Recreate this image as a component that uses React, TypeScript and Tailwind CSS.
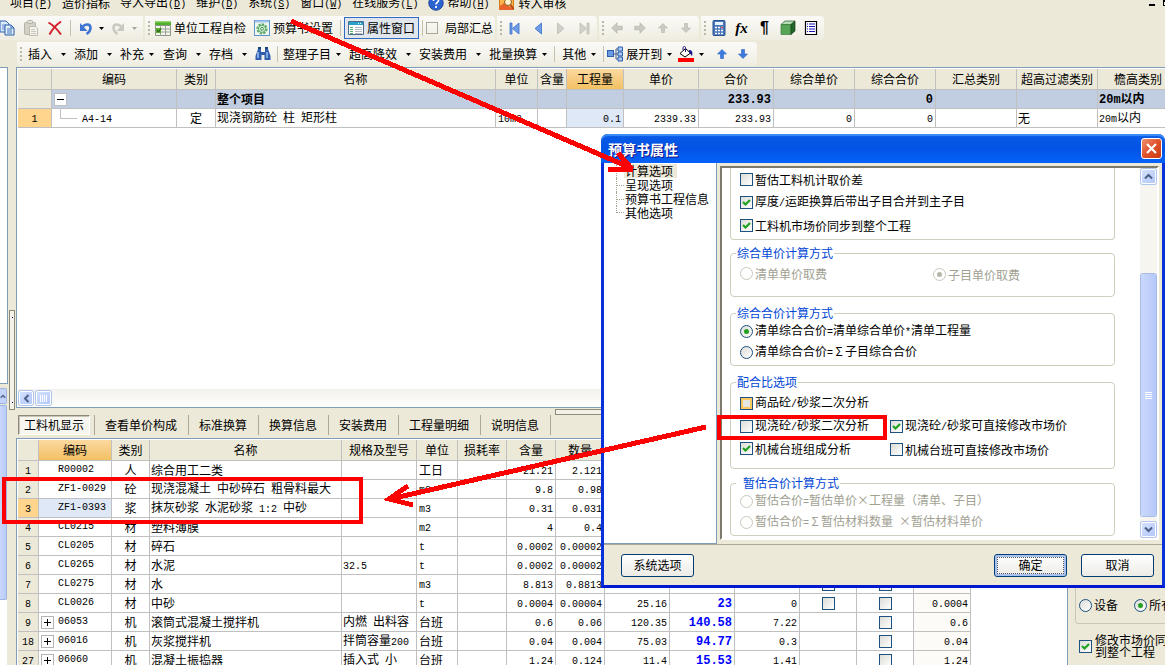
import { ReactNode } from "react";
import clsx from "clsx";

/* Latin runs are set in a half-width face next to the full-width characters */
function T({ children, bold }: { children: string; bold?: boolean }) {
    return (
        <>
            {children.split(/([\x20-\x7e]+|Σ)/).map((part, i) => {
                if (part === "Σ") {
                    return <span key={i} className="inline-block w-3 text-center">Σ</span>;
                }
                return i % 2 ? (
                    <span
                        key={i}
                        className={clsx(
                            "font-['Liberation_Mono',monospace] whitespace-pre",
                            bold ? "text-[12px] font-bold" : "text-[10px]",
                        )}
                    >
                        {part}
                    </span>
                ) : (
                    part
                );
            })}
        </>
    );
}

/* ---------- icons ---------- */

function Svg({ children, size = 16 }: { children: ReactNode; size?: number }) {
    return (
        <svg width={size} height={size} viewBox="0 0 16 16" className="shrink-0" aria-hidden="true">
            {children}
        </svg>
    );
}

const CopyIcon = () => (
    <Svg>
        <path d="M1 1h6l3 3v8H1z" fill="#dcebfb" stroke="#2f62ad" />
        <path d="M3 5h4M3 7h4M3 9h3" stroke="#5b8cd0" />
        <path d="M6 5h6l3 3v7H6z" fill="#e8f2fd" stroke="#2458a6" />
        <path d="M12 5v3h3M8 9h5M8 11h5M8 13h5" stroke="#3a70bd" fill="none" />
    </Svg>
);

const PasteIcon = () => (
    <Svg>
        <rect x="1.5" y="2.5" width="11" height="12" rx="1" fill="#d3d1c7" stroke="#b5b2a5" />
        <rect x="4.5" y="0.5" width="5" height="3" rx="1" fill="#e3e1d8" stroke="#b0ada0" />
        <path d="M6.500 6.500h6l2 2v7h-8z" fill="#f4f3ee" stroke="#bdbab0" />
        <path d="M8 9.500h4M8 11.500h5M8 13.500h5" stroke="#c9c6bc" />
    </Svg>
);

const DeleteIcon = () => (
    <Svg>
        <path d="M1.500 2.500C6 5 10 9 14 14.500M14 1.500C9 5 5 9.500 2.500 14.500" stroke="#d3212b" strokeWidth="2" fill="none" />
    </Svg>
);

const UndoIcon = ({ off }: { off?: boolean }) => (
    <Svg>
        <g transform={off ? "translate(16 0) scale(-1 1)" : undefined}>
            <path
                d="M4 8C6 4 12 3 12.500 7.500C12.500 10.500 11 12.500 8.500 14"
                stroke={off ? "#cbc9bf" : "#3f74d0"}
                strokeWidth="2.600"
                fill="none"
            />
            <path d="M2 3v8h7.500z" fill={off ? "#cbc9bf" : "#3f74d0"} />
        </g>
    </Svg>
);

const TableIcon = () => (
    <Svg>
        <path d="M0 1h16v4H0z" fill="#4fae2a" />
        <path d="M0 1h16v1.500H0z" fill="#8fd66d" />
        <path d="M0.500 5.500h15v10H0.500z" fill="#f4f6ee" stroke="#8c9488" />
        <path d="M0 9h16M0 12h16M5.500 5v11M10.500 5v11" stroke="#9aa396" />
        <rect x="1" y="8" width="5" height="5" fill="#5cab34" />
        <path d="M2 10l1.500 2L6 8.500" stroke="#164d08" fill="none" />
    </Svg>
);

const GearIcon = () => (
    <Svg>
        <rect x="0.500" y="0.500" width="15" height="15" fill="#eef6f0" stroke="#5f95cf" />
        <path d="M1 1.500h14" stroke="#a3c6ee" strokeWidth="2" />
        <circle cx="8" cy="8.800" r="4.600" fill="none" stroke="#5aa865" strokeWidth="2" strokeDasharray="2.300 1.200" />
        <circle cx="8" cy="8.800" r="3.600" fill="#d6efd8" stroke="#5aa865" />
        <circle cx="8" cy="8.800" r="1.400" fill="#fff" stroke="#3f8e4b" />
    </Svg>
);

const PropsIcon = () => (
    <Svg>
        <path d="M0.500 1.500h15v13H0.500z" fill="#fff" stroke="#4e6a8c" />
        <path d="M1 2h14v3H1z" fill="#2ba0c8" />
        <path d="M10 3.500h1M12 3.500h1" stroke="#fff" />
        <path d="M2 7.500h3M2 9.500h3M2 11.500h3M2 13.500h3" stroke="#4fae6a" />
        <path d="M7 7.500h7M7 9.500h7M7 11.500h7M7 13.500h7" stroke="#b6bcc4" />
    </Svg>
);

const NavIcon = ({ kind, off }: { kind: "first" | "prev" | "next" | "last"; off?: boolean }) => {
    const fill = off ? "#d2d0c8" : "#6d9de6";
    const flip = kind === "next" || kind === "last";
    return (
        <Svg>
            <g transform={flip ? "translate(16 0) scale(-1 1)" : undefined} fill={fill} stroke={off ? "#bfbdb4" : "#3a6fca"} strokeWidth="0.800">
                {(kind === "first" || kind === "last") && <path d="M3 3h2v11H3z" />}
                {kind === "first" || kind === "last" ? <path d="M12 3v11L5.500 8.500z" /> : <path d="M11.500 3v11L5 8.500z" />}
            </g>
        </Svg>
    );
};

const ArrowIcon = ({ deg, off = false }: { deg: number; off?: boolean }) => (
    <Svg size={deg % 180 ? 12 : 14}>
        <path
            d="M2 8l6-6v4h6v4H8v4z"
            transform={`rotate(${deg} 8 8)`}
            fill={off ? "#cccac2" : "#3f7ae0"}
            stroke={off ? "#b5b3aa" : "#2c62c4"}
            strokeWidth="0.800"
        />
    </Svg>
);

const CalcIcon = () => (
    <Svg>
        <rect x="2" y="0.500" width="12" height="15" rx="1" fill="#4a76bb" stroke="#27508f" />
        <rect x="4" y="2" width="8" height="3" fill="#e8f3ff" />
        <path d="M4 7.500h8M4 10.500h8M4 13.500h8" stroke="#fff" strokeWidth="1.600" strokeDasharray="2 1" />
        <path d="M10 7.500h2" stroke="#e0574a" strokeWidth="1.600" />
    </Svg>
);

const CubeIcon = () => (
    <Svg>
        <path d="M1 4.500L5 1h10l-4 3.500z" fill="#b5dbb5" stroke="#2c5a2c" strokeWidth="0.700" />
        <path d="M1 4.500h10v10H1z" fill="#56a556" stroke="#3c7b3c" strokeWidth="0.700" />
        <path d="M11 4.500L15 1v10l-4 3.500z" fill="#22652a" stroke="#163f1a" strokeWidth="0.700" />
    </Svg>
);

const ListIcon = () => (
    <Svg>
        <path d="M2.500 1.500h11v13h-11z" fill="#fff" stroke="#000" strokeWidth="1.200" />
        <path d="M4 4h1M4 6.500h1M4 9h1M4 11.500h1M6 4h6M6 6.500h6M6 9h6M6 11.500h6" stroke="#1515b8" strokeWidth="1.200" />
    </Svg>
);

const FindIcon = () => (
    <Svg>
        <path d="M3 3h3v3h4V3h3l2.500 7v4h-6V9h-3v5h-6v-4z" fill="#2f5fae" />
        <path d="M3 1h3v2H3zM10 1h3v2h-3z" fill="#1c3f80" />
        <path d="M3 6v6M12 6v6" stroke="#9cc0f0" strokeWidth="1.500" />
    </Svg>
);

const TreeIcon = () => (
    <Svg>
        <rect x="0.500" y="4.500" width="6" height="6" fill="#6b9be0" stroke="#2d5fae" />
        <path d="M7 8h2M9 3v10M9 3h2M9 8h2M9 13h2" stroke="#44618c" fill="none" />
        <path d="M11 1h4.500v4H11zM11 6h4.500v4H11zM11 11h4.500v4H11z" fill="#a9c8f2" stroke="#2d5fae" />
    </Svg>
);

const FillIcon = () => (
    <Svg>
        <path d="M2 7.500L7.500 2.500l5 4.500-5.500 4z" fill="#fff" stroke="#000" />
        <path d="M7.500 6V1.500C7.500 0 5 0 5 2v2" stroke="#1a1a80" fill="none" />
        <path d="M11 4c3 0 4 2 3 6c-1-1-1.500-2.500-3-3z" fill="#1a1a90" />
        <path d="M0 12h16v4H0z" fill="#f00" />
    </Svg>
);

const HelpIcon = () => (
    <Svg>
        <circle cx="8" cy="8" r="7.200" fill="#2a63cf" stroke="#1b469c" />
        <path d="M5.500 6c0-3.500 5-3.500 5-.5c0 2-2.500 2-2.500 4M8 11v2" stroke="#fff" strokeWidth="1.700" fill="none" />
    </Svg>
);

const AuditIcon = () => (
    <Svg>
        <rect x="0.500" y="1.500" width="14" height="13" fill="#f9b54a" stroke="#d8791b" />
        <path d="M1 11l4-3 9 6v1H1z" fill="#e8622d" />
        <circle cx="9" cy="7" r="3.500" fill="#fff3cf" stroke="#8a5a1c" />
        <path d="M11.500 10l3 4" stroke="#b8461b" strokeWidth="2" />
    </Svg>
);

const Caret = ({ off }: { off?: boolean }) => (
    <svg width="5" height="3" viewBox="0 0 5 3" aria-hidden="true">
        <path d="M0 0h5L2.500 3z" fill={off ? "#aaa79a" : "#000"} />
    </svg>
);

const Chevron = ({ deg }: { deg: number }) => (
    <svg width="9" height="9" viewBox="0 0 9 9" aria-hidden="true">
        <path d="M1 6.500L4.500 3 8 6.500" transform={`rotate(${deg} 4.500 4.500)`} fill="none" stroke="#4d6185" strokeWidth="2" />
    </svg>
);

/* ---------- form controls ---------- */

function CheckBox({ label, name, checked, tone = "border-[#1c5180] bg-linear-to-br from-[#dcdcd7] to-white" }: {
    label?: string;
    name: string;
    checked?: boolean;
    tone?: string;
}) {
    return (
        <label className="inline-flex items-center gap-[2px] whitespace-nowrap">
            <span className="grid size-[13px] shrink-0 place-items-center">
                <input
                    type="checkbox"
                    aria-label={label ? undefined : name}
                    defaultChecked={checked}
                    className={clsx("peer col-start-1 row-start-1 size-[13px] appearance-none border", tone)}
                />
                <svg
                    width="9"
                    height="9"
                    viewBox="0 0 9 9"
                    className="pointer-events-none invisible z-10 col-start-1 row-start-1 peer-checked:visible"
                >
                    <path d="M1 4l2.500 2.500L8 2" fill="none" stroke="#21a121" strokeWidth="2.200" />
                </svg>
            </span>
            {label && <span><T>{label}</T></span>}
        </label>
    );
}

function Radio({ label, name, checked, disabled }: { label: string; name: string; checked?: boolean; disabled?: boolean }) {
    return (
        <label className={clsx("inline-flex items-center gap-[2px] whitespace-nowrap", disabled && "text-[#a1a192]")}>
            <span className="grid size-[13px] shrink-0 place-items-center">
                <input
                    type="radio"
                    name={name}
                    defaultChecked={checked}
                    disabled={disabled}
                    className={clsx(
                        "peer col-start-1 row-start-1 size-[13px] appearance-none rounded-full border",
                        disabled ? "border-[#cac8bb] bg-white" : "border-[#1c5180] bg-linear-to-br from-[#dcdcd7] to-white",
                    )}
                />
                <span
                    className={clsx(
                        "pointer-events-none invisible z-10 col-start-1 row-start-1 size-[5px] rounded-full peer-checked:visible",
                        disabled ? "bg-[#b5b5a8]" : "bg-[#21a121]",
                    )}
                />
            </span>
            <span><T>{label}</T></span>
        </label>
    );
}

/* ---------- menu and toolbars ---------- */

const menus = [
    { text: "项目", key: "P" },
    { text: "造价指标" },
    { text: "导入导出", key: "D" },
    { text: "维护", key: "D" },
    { text: "系统", key: "S" },
    { text: "窗口", key: "W" },
    { text: "在线服务", key: "L" },
    { text: "帮助", key: "H", icon: <HelpIcon /> },
    { text: "转入审核", icon: <AuditIcon /> },
];

function MenuBar() {
    return (
        <nav className="flex h-4 items-start gap-[10px] overflow-hidden pl-[10px]">
            {menus.map((m) => (
                <button key={m.text} className="-mt-[5px] flex h-4 shrink-0 items-center gap-[3px] leading-4">
                    {m.icon}
                    <span>
                        {m.text}
                        {m.key && (
                            <span className="font-['Liberation_Mono',monospace] text-[10px]">
                                (<u>{m.key}</u>)
                            </span>
                        )}
                    </span>
                </button>
            ))}
            <span className="ml-auto flex gap-2">
                <button aria-label="最小化" className="mt-1 h-[2px] w-[6px] bg-black" />
                <button aria-label="还原" className="-mr-1 size-[6px] border border-t-2 border-black" />
            </span>
        </nav>
    );
}

const Grip = () => (
    <span className="flex w-[3px] shrink-0 flex-col gap-[2px]">
        {[1, 2, 3, 4].map((n) => (
            <i key={n} className="size-[2px] bg-[#b9b6a5]" />
        ))}
    </span>
);

const Sep = () => <span className="mx-[3px] h-4 w-px shrink-0 bg-[#c5c2b2]" />;

const segment = "flex h-6 shrink-0 items-center rounded-r-sm bg-linear-to-b from-[#fbfaf8] to-[#efede1] pl-[3px] pr-[2px]";

function IconButton({ label, children, size = "w-[23px]" }: { label: string; children: ReactNode; size?: string }) {
    return (
        <button aria-label={label} className={clsx("flex h-6 shrink-0 items-center justify-center", size)}>
            {children}
        </button>
    );
}

function MainToolbar() {
    return (
        <div className="flex gap-[2px] overflow-hidden">
            <div className="-ml-[5px] flex h-6 shrink-0 items-center bg-linear-to-b from-[#fbfaf8] to-[#efede1] pr-1">
                <IconButton label="复制" size="w-6"><CopyIcon /></IconButton>
                <IconButton label="粘贴" size="w-6"><PasteIcon /></IconButton>
                <IconButton label="删除" size="w-6"><DeleteIcon /></IconButton>
                <Sep />
                <IconButton label="撤销" size="w-[23px]"><UndoIcon /></IconButton>
                <IconButton label="撤销列表" size="w-[9px]"><Caret /></IconButton>
                <IconButton label="重做" size="w-6"><UndoIcon off /></IconButton>
                <IconButton label="重做列表" size="w-[9px]"><Caret off /></IconButton>
            </div>
            <div className={segment}>
                <Grip />
                <button className="flex items-center gap-[3px] px-1"><TableIcon />单位工程自检</button>
                <button className="flex items-center gap-[3px] px-1"><GearIcon />预算书设置</button>
                <Sep />
                <button className="flex h-[22px] items-center gap-[3px] border border-[#316ac5] bg-[#e1e6ec] px-[3px]">
                    <PropsIcon />属性窗口
                </button>
                <Sep />
                <label className="flex items-center gap-[7px]">
                    <input type="checkbox" className="size-3 appearance-none border border-[#aca899]" />
                    局部汇总
                </label>
            </div>
            <div className={segment}>
                <Grip />
                <IconButton label="首条"><NavIcon kind="first" /></IconButton>
                <IconButton label="上一条"><NavIcon kind="prev" /></IconButton>
                <IconButton label="下一条"><NavIcon kind="next" off /></IconButton>
                <IconButton label="末条"><NavIcon kind="last" off /></IconButton>
            </div>
            <div className={segment}>
                <Grip />
                <IconButton label="左移"><ArrowIcon deg={0} off /></IconButton>
                <IconButton label="右移"><ArrowIcon deg={180} off /></IconButton>
                <IconButton label="上移"><ArrowIcon deg={90} off /></IconButton>
                <IconButton label="下移"><ArrowIcon deg={270} off /></IconButton>
            </div>
            <div className={segment}>
                <Grip />
                <IconButton label="计算器"><CalcIcon /></IconButton>
                <IconButton label="函数">
                    <i className="font-['Liberation_Serif',serif] text-[15px] font-bold">fx</i>
                </IconButton>
                <IconButton label="段落">
                    <span className="font-['Liberation_Sans',sans-serif] text-base font-bold">¶</span>
                </IconButton>
                <IconButton label="立方体"><CubeIcon /></IconButton>
                <IconButton label="列表"><ListIcon /></IconButton>
            </div>
        </div>
    );
}

function DropButton({ children, tight }: { children: ReactNode; tight?: boolean }) {
    return (
        <button className="flex h-6 shrink-0 items-center">
            {children}
            <span className={clsx("flex justify-center", tight ? "w-[14px]" : "w-[22px]")}>
                <Caret />
            </span>
        </button>
    );
}

function EditToolbar() {
    return (
        <div className="mt-[2px] flex overflow-hidden pl-[17px]">
            <div className={segment}>
                <Grip />
                <span className="w-[5px]" />
                <DropButton>插入</DropButton>
                <DropButton>添加</DropButton>
                <DropButton tight>补充</DropButton>
                <span className="w-[5px]" />
                <DropButton>查询</DropButton>
                <DropButton>存档</DropButton>
                <IconButton label="查找" size="w-4"><FindIcon /></IconButton>
                <span className="w-[3px]" />
                <Sep />
                <span className="w-[2px]" />
                <DropButton tight>整理子目</DropButton>
                <span className="w-1" />
                <DropButton>超高降效</DropButton>
                <DropButton>安装费用</DropButton>
                <DropButton tight>批量换算</DropButton>
                <Sep />
                <span className="w-1" />
                <DropButton tight>其他</DropButton>
                <Sep />
                <DropButton tight><span className="mr-[3px]"><TreeIcon /></span>展开到</DropButton>
                <span className="w-[2px]" />
                <DropButton tight><FillIcon /></DropButton>
                <span className="w-[3px]" />
                <IconButton label="向上" size="w-[21px]"><ArrowIcon deg={90} /></IconButton>
                <IconButton label="向下" size="w-[21px]"><ArrowIcon deg={270} /></IconButton>
                <span className="w-[2px]" />
            </div>
        </div>
    );
}

/* ---------- grids ---------- */

const cell = "h-[19px] overflow-hidden border-r border-b border-[#c0c0c0] p-0 whitespace-nowrap";
const head = "h-[21px] overflow-hidden border-r border-b border-[#c0c0c0] p-0 font-normal whitespace-nowrap";

const itemCols = ["w-[34px]", "w-[125px]", "w-[39px]", "", "w-[42px]", "w-[29px]", "w-[57px]", "w-[75px]", "w-[75px]", "w-[81px]", "w-[81px]", "w-[81px]", "w-[81px]", "w-[81px]"];
const itemHeads = ["", "编码", "类别", "名称", "单位", "含量", "工程量", "单价", "合价", "综合单价", "综合合价", "汇总类别", "超高过滤类别", "檐高类别"];

function ItemGrid() {
    return (
        <table className="w-full min-w-[1161px] table-fixed border-separate border-spacing-0">
            <colgroup>
                {itemCols.map((c, i) => <col key={i} className={c} />)}
            </colgroup>
            <thead>
                <tr>
                    {itemHeads.map((h, i) => (
                        <th key={i} className={clsx(head, h === "工程量" ? "bg-linear-to-b from-[#fbd9a0] to-[#f3c062]" : "bg-[#ece9d8]")}>
                            {h}
                        </th>
                    ))}
                </tr>
            </thead>
            <tbody>
                <tr className="bg-[#c1cde0] font-bold">
                    <td className={clsx(cell, "bg-[#ece9d8]")} />
                    <td className={clsx(cell, "pl-[2px]")}>
                        <button aria-label="折叠" className="flex size-[13px] items-center justify-center border border-[#c0c0c0] bg-white">
                            <span className="h-px w-[7px] bg-black" />
                        </button>
                    </td>
                    <td className={cell} />
                    <td className={clsx(cell, "pl-px")}>整个项目</td>
                    <td className={cell} />
                    <td className={cell} />
                    <td className={cell} />
                    <td className={cell} />
                    <td className={clsx(cell, "pr-[2px] text-right")}><T bold>233.93</T></td>
                    <td className={cell} />
                    <td className={clsx(cell, "pr-[2px] text-right")}><T bold>0</T></td>
                    <td className={cell} />
                    <td className={cell} />
                    <td className={clsx(cell, "pl-px")}><T bold>20m以内</T></td>
                </tr>
                <tr className="bg-white">
                    <td className={clsx(cell, "bg-[#ffd58d] text-center")}><T>1</T></td>
                    <td className={cell}>
                        <div className="flex h-[18px] pl-2">
                            <span className="h-[10px] w-[17px] border-b border-l border-[#c0c0c0]" />
                            <span className="pl-[5px] leading-4"><T>A4-14</T></span>
                        </div>
                    </td>
                    <td className={clsx(cell, "text-center")}>定</td>
                    <td className={clsx(cell, "pl-px")}><T>现浇钢筋砼 柱 矩形柱</T></td>
                    <td className={clsx(cell, "pl-[2px]")}><T>10m3</T></td>
                    <td className={cell} />
                    <td className={clsx(cell, "bg-[#dfe8f6] pr-[2px] text-right")}><T>0.1</T></td>
                    <td className={clsx(cell, "pr-[2px] text-right")}><T>2339.33</T></td>
                    <td className={clsx(cell, "pr-[2px] text-right")}><T>233.93</T></td>
                    <td className={clsx(cell, "pr-[2px] text-right")}><T>0</T></td>
                    <td className={clsx(cell, "pr-[2px] text-right")}><T>0</T></td>
                    <td className={cell} />
                    <td className={clsx(cell, "pl-px")}>无</td>
                    <td className={clsx(cell, "pl-px")}><T>20m以内</T></td>
                </tr>
            </tbody>
        </table>
    );
}

interface Resource {
    no: string;
    code: string;
    kind: string;
    name: string;
    spec?: string;
    unit: string;
    rate: string;
    qty: string;
    price?: string;
    market?: string;
    diff?: string;
    boxes?: number;
    total?: string;
}

const resources: Resource[] = [
    { no: "1", code: "R00002", kind: "人", name: "综合用工二类", unit: "工日", rate: "21.21", qty: "2.121" },
    { no: "2", code: "ZF1-0029", kind: "砼", name: "现浇混凝土 中砂碎石 粗骨料最大", unit: "m3", rate: "9.8", qty: "0.98" },
    { no: "3", code: "ZF1-0393", kind: "浆", name: "抹灰砂浆 水泥砂浆 1:2 中砂", unit: "m3", rate: "0.31", qty: "0.031" },
    { no: "4", code: "CL0215", kind: "材", name: "塑料薄膜", unit: "m2", rate: "4", qty: "0.4" },
    { no: "5", code: "CL0205", kind: "材", name: "碎石", unit: "t", rate: "0.0002", qty: "0.00002" },
    { no: "6", code: "CL0265", kind: "材", name: "水泥", spec: "32.5", unit: "t", rate: "0.0002", qty: "0.00002" },
    { no: "7", code: "CL0275", kind: "材", name: "水", unit: "m3", rate: "8.813", qty: "0.8813", boxes: 2 },
    { no: "8", code: "CL0026", kind: "材", name: "中砂", unit: "t", rate: "0.0004", qty: "0.00004", price: "25.16", market: "23", diff: "0", boxes: 2, total: "0.0004" },
    { no: "9", code: "06053", kind: "机", name: "滚筒式混凝土搅拌机", spec: "内燃 出料容", unit: "台班", rate: "0.6", qty: "0.06", price: "120.35", market: "140.58", diff: "7.22", boxes: 1, total: "0.6" },
    { no: "18", code: "06016", kind: "机", name: "灰浆搅拌机", spec: "拌筒容量200", unit: "台班", rate: "0.04", qty: "0.004", price: "75.03", market: "94.77", diff: "0.3", boxes: 1, total: "0.04" },
    { no: "27", code: "06060", kind: "机", name: "混凝土振捣器", spec: "插入式 小", unit: "台班", rate: "1.24", qty: "0.124", price: "11.4", market: "15.53", diff: "1.41", boxes: 1, total: "1.24" },
];

const resCols = ["w-[21px]", "w-[73px]", "w-[38px]", "w-[192px]", "w-[75px]", "w-[41px]", "w-[49px]", "w-[49px]", "w-[49px]", "w-[65px]", "w-[65px]", "w-[65px]", "w-[57px]", "w-[57px]", "w-[57px]"];
const resHeads = ["", "编码", "类别", "名称", "规格及型号", "单位", "损耗率", "含量", "数量", "", "", "", "", "", ""];

function ResourceGrid() {
    return (
        <table className="w-[953px] table-fixed border-separate border-spacing-0">
            <colgroup>
                {resCols.map((c, i) => <col key={i} className={c} />)}
            </colgroup>
            <thead>
                <tr>
                    {resHeads.map((h, i) => (
                        <th key={i} className={clsx(head, h === "编码" ? "bg-linear-to-b from-[#fbd9a0] to-[#f3c062]" : "bg-[#ece9d8]")}>
                            {h}
                        </th>
                    ))}
                </tr>
            </thead>
            <tbody>
                {resources.map((r) => (
                    <tr key={r.no} className="bg-white">
                        <td className={clsx(cell, "text-center", r.no === "3" ? "bg-[#ffd58d]" : "bg-[#ece9d8]")}><T>{r.no}</T></td>
                        <td className={clsx(cell, r.no === "3" && "bg-[#dfe8f6]")}>
                            <div className="flex h-[18px] items-center pl-[2px]">
                                <span className="flex w-[17px] shrink-0">
                                    {r.kind === "机" && (
                                        <button aria-label="展开" className="grid size-[13px] place-items-center border border-[#b4b4b4] bg-white">
                                            <span className="col-start-1 row-start-1 h-px w-[7px] bg-black" />
                                            <span className="col-start-1 row-start-1 h-[7px] w-px bg-black" />
                                        </button>
                                    )}
                                </span>
                                <T>{r.code}</T>
                            </div>
                        </td>
                        <td className={clsx(cell, "text-center")}>{r.kind}</td>
                        <td className={clsx(cell, "pl-px")}><T>{r.name}</T></td>
                        <td className={clsx(cell, "pl-px")}><T>{r.spec ?? ""}</T></td>
                        <td className={clsx(cell, "pl-[2px]")}><T>{r.unit}</T></td>
                        <td className={cell} />
                        <td className={clsx(cell, "pr-[2px] text-right")}><T>{r.rate}</T></td>
                        <td className={clsx(cell, "pr-[2px] text-right")}><T>{r.qty}</T></td>
                        <td className={clsx(cell, "pr-[2px] text-right")}><T>{r.price ?? ""}</T></td>
                        <td className={clsx(cell, "pr-[2px] text-right text-[#0000ff]")}><T bold>{r.market ?? ""}</T></td>
                        <td className={clsx(cell, "pr-[2px] text-right")}><T>{r.diff ?? ""}</T></td>
                        <td className={cell}>
                            <div className="flex justify-center">{r.boxes === 2 && <CheckBox name={`${r.name} 暂估`} />}</div>
                        </td>
                        <td className={cell}>
                            <div className="flex justify-center">{r.boxes && <CheckBox name={`${r.name} 锁定`} />}</div>
                        </td>
                        <td className={clsx(cell, "bg-[#fdfbf7] pr-[2px] text-right")}><T>{r.total ?? ""}</T></td>
                    </tr>
                ))}
            </tbody>
        </table>
    );
}

const tabs = ["查看单价构成", "标准换算", "换算信息", "安装费用", "工程量明细", "说明信息"];

function Tabs() {
    return (
        <div className="flex h-[22px] items-center pl-[2px]">
            <button className="h-5 border border-[#8d8a7c] border-r-white border-b-white bg-[#f6f5ef] px-[5px] shadow-[inset_1px_1px_0_#c8c5b6]">
                工料机显示
            </button>
            <span className="ml-1 h-5 w-px bg-[#aca899]" />
            {tabs.map((t) => (
                <button key={t} className="h-5 border-r border-[#aca899] pr-[11px] pl-[10px]">
                    {t}
                </button>
            ))}
        </div>
    );
}

const scrollButton = "flex shrink-0 items-center justify-center rounded-[2px] border border-white bg-linear-to-br from-[#d4e0fd] to-[#b3c8fa] shadow-[0_0_0_1px_#b0c4ec]";

function FilterPanel() {
    return (
        <aside className="w-[98px] shrink-0 overflow-hidden border-l border-[#7f9db9] bg-[#ece9d8] pl-[7px]">
            <div className="flex h-[186px] w-[140px] items-end rounded-[3px] border border-[#c9c7b5] pb-[11px] pl-[3px]">
                <div className="flex gap-4">
                    <Radio name="scope" label="设备" />
                    <Radio name="scope" label="所有" checked />
                </div>
            </div>
            <div className="mt-[10px] flex w-[140px] items-center pl-1">
                <label className="flex items-center gap-[3px] leading-3">
                    <CheckBox name="修改市场价同步到整个工程" checked />
                    <span>修改市场价同步<br />到整个工程</span>
                </label>
            </div>
        </aside>
    );
}

/* ---------- dialog ---------- */

const group = "w-[385px] rounded-[4px] border border-[#cfcfbd] px-[9px]";
const legend = "-ml-1 px-px leading-3 text-[#0046d5]";
const row = "flex h-[23px] items-center";
const shortRow = "flex h-[21px] items-center";

function OptionPage() {
    return (
        <div className="flex-1 overflow-hidden bg-white pl-2">
            <div className={clsx(group, "rounded-t-none border-t-0 pb-[2px]")}>
                <div className={row}><CheckBox name="diff" label="暂估工料机计取价差" /></div>
                <div className={row}><CheckBox name="merge" label="厚度/运距换算后带出子目合并到主子目" checked /></div>
                <div className={row}><CheckBox name="sync" label="工料机市场价同步到整个工程" checked /></div>
            </div>
            <fieldset className={clsx(group, "mt-[7px] pt-1 pb-[10px]")}>
                <legend className={legend}>综合单价计算方式</legend>
                <div className={row}>
                    <span className="w-[193px]"><Radio name="unit" label="清单单价取费" disabled /></span>
                    <Radio name="unit" label="子目单价取费" checked disabled />
                </div>
            </fieldset>
            <fieldset className={clsx(group, "mt-[10px] pt-[2px] pb-[2px]")}>
                <legend className={legend}>综合合价计算方式</legend>
                <div className={shortRow}><Radio name="sum" label="清单综合合价=清单综合单价*清单工程量" checked /></div>
                <div className={shortRow}><Radio name="sum" label="清单综合合价=Σ子目综合合价" /></div>
            </fieldset>
            <fieldset className={clsx(group, "mt-[10px] pt-1 pb-[7px]")}>
                <legend className={legend}>配合比选项</legend>
                <div className={row}>
                    <CheckBox name="mix" label="商品砼/砂浆二次分析" tone="border-[#1c5180] bg-[#e6e6e0] shadow-[inset_0_0_0_2px_#fbc761]" />
                </div>
                <div className={row}>
                    <span className="w-[150px]"><CheckBox name="cast" label="现浇砼/砂浆二次分析" /></span>
                    <CheckBox name="castPrice" label="现浇砼/砂浆可直接修改市场价" checked />
                </div>
                <div className={row}>
                    <span className="w-[150px]"><CheckBox name="shift" label="机械台班组成分析" checked /></span>
                    <CheckBox name="shiftPrice" label="机械台班可直接修改市场价" />
                </div>
            </fieldset>
            <fieldset className={clsx(group, "mt-2 pt-[2px] pb-[2px]")}>
                <legend className={clsx(legend, "pl-[7px]")}>暂估合价计算方式</legend>
                <div className={shortRow}><Radio name="est" label="暂估合价=暂估单价×工程量（清单、子目）" disabled /></div>
                <div className={shortRow}><Radio name="est" label="暂估合价=Σ暂估材料数量 ×暂估材料单价" disabled /></div>
            </fieldset>
        </div>
    );
}

const pages = ["计算选项", "呈现选项", "预算书工程信息", "其他选项"];
const xpButton = "h-[23px] w-[73px] rounded-[3px] border border-[#003c74] bg-linear-to-b from-white to-[#ecebe5]";

function PropertyDialog() {
    return (
        <section
            role="dialog"
            aria-label="预算书属性"
            className="absolute top-[134px] right-0 left-[601px] flex flex-col rounded-t-[7px] border-x-[3px] border-b-[3px] border-[#0831d9] border-b-[#0019cf] bg-[#ece9d8]"
        >
            <header className="-mx-[3px] flex h-[29px] items-center justify-between rounded-t-[7px] bg-linear-to-b from-[#0a5be8] via-[#0353e4] to-[#0462fb] pr-[3px] pl-[7px] shadow-[inset_0_2px_1px_#3f8cf3]">
                <h2 className="text-[14px] font-bold text-white [text-shadow:1px_1px_0_#0f1089]">预算书属性</h2>
                <button aria-label="关闭" className="flex size-[21px] items-center justify-center rounded-[3px] border border-white bg-linear-to-br from-[#f0906f] via-[#e0502a] to-[#c93a12]">
                    <svg width="13" height="13" viewBox="0 0 13 13"><path d="M2 2l9 9M11 2l-9 9" stroke="#fff" strokeWidth="2.200" /></svg>
                </button>
            </header>
            <div className="flex h-[382px] border-b border-[#aca899]">
                <div className="w-[113px] shrink-0 border-r border-b border-[#7f9db9] bg-white pt-px pl-3">
                    {pages.map((p, i) => (
                        <button key={p} className="flex h-[14px] items-center">
                            <span className={clsx("flex w-2 shrink-0 items-center border-l border-dotted border-[#a5a294]", i === 3 ? "h-[7px] self-start" : "h-[14px]")}>
                                <span className={clsx("w-full border-t border-dotted border-[#a5a294]", i === 3 && "self-end")} />
                            </span>
                            <span className={clsx("px-px leading-[14px]", i === 0 && "bg-[#ece9d8] pr-1")}>{p}</span>
                        </button>
                    ))}
                </div>
                <div className="mt-[3px] mr-[3px] mb-1 ml-[3px] flex flex-1 border-2 border-[#7d7a6c] border-r-white border-b-white">
                    <OptionPage />
                    <div className="flex w-[17px] shrink-0 flex-col items-center bg-[#f6f5f0] py-px">
                        <button aria-label="向上滚动" className={clsx(scrollButton, "size-[15px]")}><Chevron deg={0} /></button>
                        <span className="h-[90px]" />
                        <span className="flex w-[15px] flex-1 flex-col items-center justify-center gap-px rounded-[2px] bg-linear-to-r from-[#cad8fd] to-[#b5c8f8] shadow-[0_0_0_1px_#a7bce8]">
                            {[1, 2, 3, 4].map((n) => <i key={n} className="h-px w-[7px] bg-white" />)}
                        </span>
                        <span className="h-[6px]" />
                        <button aria-label="向下滚动" className={clsx(scrollButton, "size-[15px]")}><Chevron deg={180} /></button>
                    </div>
                </div>
            </div>
            <footer className="flex h-[40px] items-center pr-2 pl-[17px]">
                <button className={xpButton}>系统选项</button>
                <button className={clsx(xpButton, "ml-auto shadow-[inset_0_0_0_2px_#a9c1f0] outline-1 -outline-offset-4 outline-dotted outline-[#555]")}>
                    确定
                </button>
                <button className={clsx(xpButton, "ml-[14px]")}>取消</button>
            </footer>
        </section>
    );
}

/* red notes drawn over the windows */
function Marks() {
    return (
        <svg
            width="1165"
            height="665"
            viewBox="0 0 1165 665"
            className="pointer-events-none absolute top-0 left-0"
            fill="none"
            stroke="#ff0000"
            strokeWidth="4"
            shapeRendering="crispEdges"
            aria-hidden="true"
        >
            <path d="M291 21L631 168M618 153L632 169M608 169.500H633" strokeWidth="5" />
            <path d="M706 427L390 499M408 486L389 499L413 505" strokeWidth="5" />
            <rect x="4" y="479" width="357" height="43" />
            <rect x="719" y="416.500" width="166" height="21" />
        </svg>
    );
}

export default function App() {
    return (
        <main className="relative flex h-screen flex-col overflow-hidden bg-[#ece9d8] font-['Noto_Sans_CJK_SC',sans-serif] text-[12px] leading-[14px] text-black">
            <MenuBar />
            <MainToolbar />
            <EditToolbar />
            <div className="mt-px flex min-h-0 flex-1">
                <div className="flex w-2 shrink-0 flex-col">
                    <div className="h-[317px] border-t border-r border-b border-[#7f9db9] bg-white" />
                    <button aria-label="收起" className="mt-1 mr-px flex h-4 items-center justify-end overflow-hidden rounded-r-[2px] border border-l-0 border-[#9db4e0] bg-[#c3d3fb]">
                        <Chevron deg={0} />
                    </button>
                    <div className="mt-px mr-px h-[195px] rounded-r-[2px] border border-l-0 border-[#9db4e0] bg-linear-to-r from-[#c9d7fc] to-[#b9cbf8]" />
                    <div className="mr-px flex-1 bg-white" />
                </div>
                <div className="w-2 shrink-0 px-px pt-[243px]">
                    <div className="flex h-[100px] w-[6px] flex-col items-center justify-between border border-[#8d8a7c] bg-[#f3f1e8] py-[6px]">
                        <i className="size-px bg-[#00007f]" />
                        <i className="size-px bg-[#00007f]" />
                    </div>
                </div>
                <div className="flex min-w-0 flex-1 flex-col">
                    <div className="flex h-[341px] shrink-0 flex-col overflow-hidden border-y border-l border-[#7f9db9] bg-white pt-px pl-px">
                        <div className="flex-1">
                            <ItemGrid />
                        </div>
                        <div className="flex h-[18px] items-center gap-[3px] bg-linear-to-b from-[#f3f1ec] to-[#fefefb] pl-px">
                            <button aria-label="向左滚动" className={clsx(scrollButton, "size-[14px]")}><Chevron deg={270} /></button>
                            <span className={clsx(scrollButton, "h-[14px] w-[15px] gap-px")}>
                                {[1, 2, 3, 4].map((n) => <i key={n} className="h-[7px] w-px bg-white" />)}
                            </span>
                        </div>
                    </div>
                    <div className="flex h-[6px] shrink-0 pt-px pl-[539px]">
                        <span className="h-[6px] w-[100px] shrink-0 border border-[#8d8a7c] bg-[#f3f1e8]" />
                    </div>
                    <Tabs />
                    <div className="mt-[2px] flex min-h-0 flex-1 overflow-hidden">
                        <div className="flex-1 overflow-hidden border-t border-l border-[#7f9db9] bg-white pt-px pl-px">
                            <ResourceGrid />
                        </div>
                        <FilterPanel />
                    </div>
                </div>
            </div>
            <PropertyDialog />
            <Marks />
        </main>
    );
}
